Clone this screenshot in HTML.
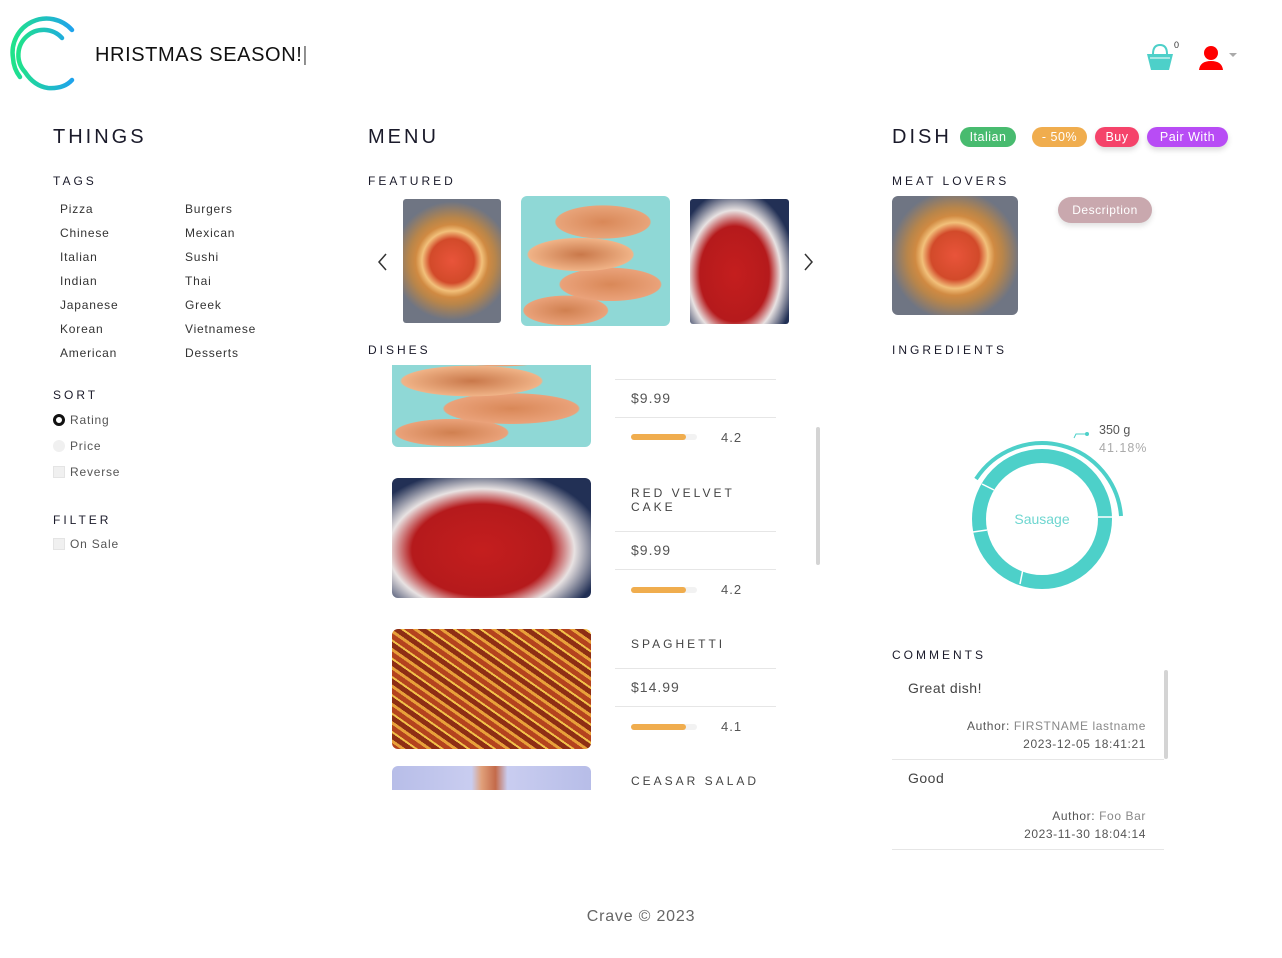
<!DOCTYPE html>
<html><head><meta charset="utf-8"><style>
*{margin:0;padding:0;box-sizing:border-box}
body{width:1282px;height:958px;background:#fff;font-family:"Liberation Sans",sans-serif;color:#222;position:relative;overflow:hidden}
.a{position:absolute;white-space:nowrap}
.h1{font-size:20px;letter-spacing:3px;color:#1a1a2a}
.h2{font-size:12px;letter-spacing:3px;color:#1a1a2a}
.t{font-size:12px;letter-spacing:0.8px;color:#333}
.ln{position:absolute;height:1px;background:#e6e6e6}
.g{color:#555;font-size:14px;letter-spacing:1px}
.bar{position:absolute;width:66px;height:6px;border-radius:3px;background:#f2f2f2}
.bar i{display:block;width:55px;height:6px;border-radius:3px;background:#f0ad4e}
.badge{position:absolute;height:20px;border-radius:10px;color:#fff;font-size:12.5px;letter-spacing:0.5px;text-align:center;line-height:20px}
.img{position:absolute;border-radius:6px;overflow:hidden}
.pizza{background:radial-gradient(circle at 50% 50%,#e9543a 0,#d24a2a 28%,#f2c07a 38%,#d08a42 46%,#b8854a 55%,#6f7583 75%)}
.salmon{background:radial-gradient(ellipse 45% 18% at 55% 20%,#d98858 0,#e8a47a 70%,transparent 72%),radial-gradient(ellipse 50% 18% at 40% 45%,#c9784a 0,#f0b387 70%,transparent 72%),radial-gradient(ellipse 48% 18% at 60% 68%,#d98858 0,#eaa27a 70%,transparent 72%),radial-gradient(ellipse 40% 16% at 30% 88%,#d08050 0,#eaa27a 70%,transparent 72%),#8fd8d6}
.cake{background:radial-gradient(ellipse at 45% 60%,#c41e1e 0,#b51a1c 45%,#e8e2e2 60%,#223055 80%)}
.spag{background:repeating-linear-gradient(35deg,#b4431e 0 5px,#e8a03a 5px 8px,#8e2e14 8px 13px,#f2c14a 13px 15px)}
</style></head><body>

<svg class="a" style="left:0;top:0" width="90" height="100" viewBox="0 0 90 100">
<defs><linearGradient id="lg" x1="0" y1="0" x2="1" y2="0"><stop offset="0" stop-color="#1fe38a"/><stop offset="1" stop-color="#1fa3ec"/></linearGradient></defs>
<path d="M72 30 A34 34 0 0 0 13 58 A34 34 0 0 0 20 77" fill="none" stroke="url(#lg)" stroke-width="4.5" stroke-linecap="round"/>
<path d="M62 38 A24 24 0 0 0 25 72 Q34 86 48 88 Q64 89 72 80" fill="none" stroke="url(#lg)" stroke-width="4.5" stroke-linecap="round"/>
</svg>
<div class="a" style="left:95px;top:44px;font-size:20px;letter-spacing:0.6px;color:#111">HRISTMAS SEASON!<span style="color:#777">|</span></div>

<svg class="a" style="left:1146px;top:42px" width="28" height="30" viewBox="0 0 28 30"><path d="M7 12 Q7 3 14 3 Q21 3 21 12" fill="none" stroke="#4dd0c9" stroke-width="2"/><path d="M1 12 H27 L23 28 H5 Z" fill="#4dd0c9"/><path d="M4 16 H24" stroke="#fff" stroke-width="1"/></svg>
<div class="a" style="left:1174px;top:40px;font-size:9px;color:#333">0</div>
<svg class="a" style="left:1198px;top:44px" width="28" height="28" viewBox="0 0 28 28"><circle cx="13" cy="9" r="7" fill="#f00"/><path d="M1 26 Q2 17 13 17 Q24 17 25 26 Z" fill="#f00"/></svg>
<div class="a" style="left:1229px;top:53px;width:0;height:0;border-left:4px solid transparent;border-right:4px solid transparent;border-top:4px solid #aaa"></div>

<div class="a h1" style="left:53px;top:126px">THINGS</div>
<div class="a h2" style="left:53px;top:174px">TAGS</div>
<div class="a t" style="left:60px;top:197px;line-height:24px">Pizza<br>Chinese<br>Italian<br>Indian<br>Japanese<br>Korean<br>American</div>
<div class="a t" style="left:185px;top:197px;line-height:24px">Burgers<br>Mexican<br>Sushi<br>Thai<br>Greek<br>Vietnamese<br>Desserts</div>
<div class="a h2" style="left:53px;top:388px">SORT</div>
<div class="a" style="left:53px;top:414px;width:12px;height:12px;border-radius:50%;border:3.5px solid #111"></div>
<div class="a t" style="left:70px;top:413px;color:#555">Rating</div>
<div class="a" style="left:53px;top:440px;width:12px;height:12px;border-radius:50%;background:#f0f0f0"></div>
<div class="a t" style="left:70px;top:439px;color:#555">Price</div>
<div class="a" style="left:53px;top:466px;width:12px;height:12px;background:#f0f0f0;border:1px solid #e4e4e4"></div>
<div class="a t" style="left:70px;top:465px;color:#555">Reverse</div>
<div class="a h2" style="left:53px;top:513px">FILTER</div>
<div class="a" style="left:53px;top:538px;width:12px;height:12px;background:#f0f0f0;border:1px solid #e4e4e4"></div>
<div class="a t" style="left:70px;top:537px;color:#555">On Sale</div>

<div class="a h1" style="left:368px;top:126px">MENU</div>
<div class="a h2" style="left:368px;top:174px">FEATURED</div>
<svg class="a" style="left:376px;top:253px" width="12" height="18"><path d="M10 1 L3 9 L10 17" fill="none" stroke="#333" stroke-width="1.5"/></svg>
<svg class="a" style="left:803px;top:253px" width="12" height="18"><path d="M2 1 L9 9 L2 17" fill="none" stroke="#333" stroke-width="1.5"/></svg>
<div class="img pizza" style="left:403px;top:199px;width:98px;height:124px;border-radius:3px"></div>
<div class="img salmon" style="left:521px;top:196px;width:149px;height:130px"></div>
<div class="img cake" style="left:690px;top:199px;width:99px;height:125px;border-radius:3px"></div>

<div class="a h2" style="left:368px;top:343px">DISHES</div>
<div class="a" style="left:392px;top:365px;width:400px;height:425px;overflow:hidden">
 <div class="img salmon" style="left:0;top:-38px;width:199px;height:120px"></div>
 <div class="img cake" style="left:0;top:113px;width:199px;height:120px"></div>
 <div class="img spag" style="left:0;top:264px;width:199px;height:120px"></div>
 <div class="img" style="left:0;top:401px;width:199px;height:120px;background:linear-gradient(90deg,#b7bde8 0,#c9cdf0 40%,#e0a07a 45%,#c46a4a 52%,#c9cdf0 58%,#b7bde8 100%)"></div>
</div>
<div class="ln" style="left:615px;top:379px;width:161px"></div>
<div class="a g" style="left:631px;top:390px">$9.99</div>
<div class="ln" style="left:615px;top:417px;width:161px"></div>
<div class="bar" style="left:631px;top:434px"><i></i></div>
<div class="a g" style="left:721px;top:430px;font-size:13px">4.2</div>

<div class="a h2" style="left:631px;top:486px;color:#444;line-height:14px">RED VELVET<br>CAKE</div>
<div class="ln" style="left:615px;top:531px;width:161px"></div>
<div class="a g" style="left:631px;top:542px">$9.99</div>
<div class="ln" style="left:615px;top:569px;width:161px"></div>
<div class="bar" style="left:631px;top:587px"><i></i></div>
<div class="a g" style="left:721px;top:582px;font-size:13px">4.2</div>

<div class="a h2" style="left:631px;top:637px;color:#444">SPAGHETTI</div>
<div class="ln" style="left:615px;top:668px;width:161px"></div>
<div class="a g" style="left:631px;top:679px">$14.99</div>
<div class="ln" style="left:615px;top:706px;width:161px"></div>
<div class="bar" style="left:631px;top:724px"><i></i></div>
<div class="a g" style="left:721px;top:719px;font-size:13px">4.1</div>
<div class="a h2" style="left:631px;top:774px;color:#444">CEASAR SALAD</div>
<div class="a" style="left:816px;top:427px;width:4px;height:138px;border-radius:2px;background:#d4d4d4"></div>

<div class="a h1" style="left:892px;top:126px">DISH</div>
<div class="badge" style="left:960px;top:127px;width:56px;background:#48bb6f">Italian</div>
<div class="badge" style="left:1032px;top:127px;width:55px;background:#f0ad4e">- 50%</div>
<div class="badge" style="left:1095px;top:127px;width:44px;background:#f5436a;box-shadow:0 3px 6px rgba(0,0,0,.15)">Buy</div>
<div class="badge" style="left:1147px;top:127px;width:81px;background:#b84cf5;box-shadow:0 3px 6px rgba(0,0,0,.15)">Pair With</div>
<div class="a h2" style="left:892px;top:174px">MEAT LOVERS</div>
<div class="img pizza" style="left:892px;top:196px;width:126px;height:119px"></div>
<div class="badge" style="left:1058px;top:197px;width:94px;height:26px;line-height:26px;border-radius:13px;background:#c9a8ae;box-shadow:0 3px 6px rgba(0,0,0,.12);font-size:12px">Description</div>
<div class="a h2" style="left:892px;top:343px">INGREDIENTS</div>

<svg class="a" style="left:960px;top:415px" width="200" height="180" viewBox="960 415 200 180">
<circle cx="1042" cy="519" r="63" fill="none" stroke="#4dd0c9" stroke-width="14"/>
<g stroke="#fff" stroke-width="1.5">
<line x1="1098" y1="517" x2="1113" y2="517"/><line x1="982" y1="484" x2="994" y2="490"/><line x1="973" y1="532" x2="987" y2="530"/><line x1="1023" y1="569" x2="1020" y2="584"/></g>
<path d="M976 479 A79 79 0 0 1 1121 516" fill="none" stroke="#4dd0c9" stroke-width="4"/>
<path d="M1074 438 L1076 434 H1087" fill="none" stroke="#4dd0c9" stroke-width="1"/><circle cx="1087" cy="434" r="2" fill="#4dd0c9"/>
<text x="1099" y="434" font-family="Liberation Sans" font-size="12.5" fill="#555">350 g</text>
<text x="1099" y="452" font-family="Liberation Sans" font-size="12.5" fill="#aaa" letter-spacing="1">41.18%</text>
<text x="1042" y="524" font-family="Liberation Sans" font-size="14" fill="#6ed6d0" text-anchor="middle">Sausage</text>
</svg>

<div class="a h2" style="left:892px;top:648px">COMMENTS</div>
<div class="a" style="left:908px;top:680px;font-size:14px;color:#444;letter-spacing:0.5px">Great dish!</div>
<div class="a" style="left:900px;top:717px;width:246px;text-align:right;font-size:12px;letter-spacing:0.6px;color:#555;line-height:18px">Author: <span style="color:#888">FIRSTNAME lastname</span><br>2023-12-05 18:41:21</div>
<div class="ln" style="left:892px;top:759px;width:272px"></div>
<div class="a" style="left:908px;top:770px;font-size:14px;color:#444;letter-spacing:0.5px">Good</div>
<div class="a" style="left:900px;top:807px;width:246px;text-align:right;font-size:12px;letter-spacing:0.6px;color:#555;line-height:18px">Author: <span style="color:#888">Foo Bar</span><br>2023-11-30 18:04:14</div>
<div class="ln" style="left:892px;top:849px;width:272px"></div>
<div class="a" style="left:1164px;top:670px;width:4px;height:89px;border-radius:2px;background:#d4d4d4"></div>

<div class="a" style="left:0;width:1282px;top:908px;text-align:center;font-size:16px;color:#666;letter-spacing:0.8px">Crave © 2023</div>
</body></html>
